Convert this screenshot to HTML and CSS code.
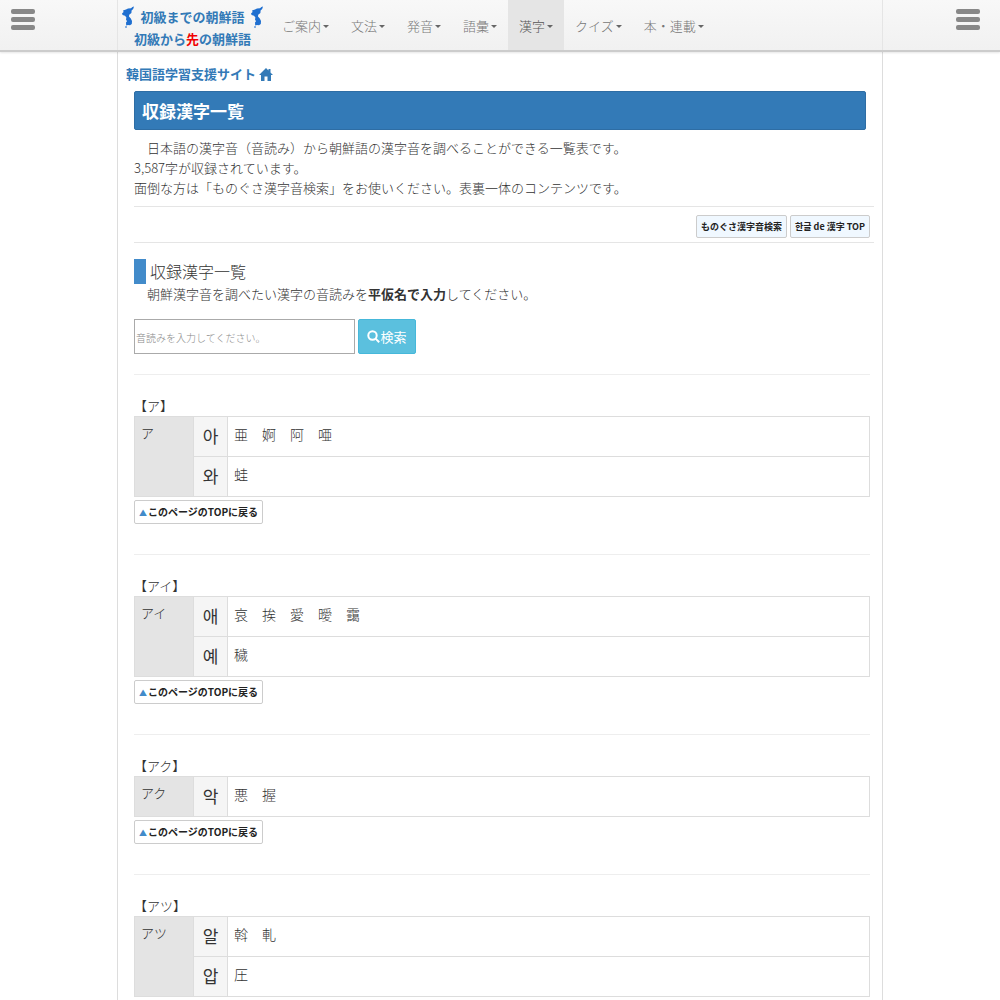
FILE: index.html
```html
<!DOCTYPE html>
<html lang="ja">
<head>
  <meta charset="UTF-8">
  <meta name="viewport" content="width=device-width, initial-scale=1">
  <title>収録漢字一覧</title>
  <link rel="stylesheet" href="styles.css">
</head>
<body id="top">

  <svg class="defs" aria-hidden="true">
    <symbol id="korea" viewBox="0 0 14 22">
      <path d="M13 .4 11.400 1 10 2.200 7 2.400 5 3.600 2 4.400 2.600 6 1 7.400 1.600 9 4 9.800 5.400 11.400 5 13.600 6 15.200 5 16.600 5.200 19.400 7 19 9 19.200 10.800 18 11 15 9.800 12.400 8 10.400 8.200 8.800 10.400 7 10.600 4.600 12.200 3Z"/>
      <path d="M4 20.600h2v1H4z"/>
    </symbol>
  </svg>

  <header class="navbar">
    <button class="menu-btn" aria-label="左メニュー"><span></span><span></span><span></span></button>
    <div class="navbar-inner">
      <a class="brand" href="#top">
        <span class="brand-row">
          <svg class="map"><use href="#korea"/></svg>
          初級までの朝鮮語
          <svg class="map"><use href="#korea"/></svg>
        </span>
        <span>初級から<em>先</em>の朝鮮語</span>
      </a>
      <nav class="nav">
        <a href="#">ご案内</a>
        <a href="#">文法</a>
        <a href="#">発音</a>
        <a href="#">語彙</a>
        <a href="#" class="active">漢字</a>
        <a href="#">クイズ</a>
        <a href="#">本・連載</a>
      </nav>
    </div>
    <button class="menu-btn" aria-label="右メニュー"><span></span><span></span><span></span></button>
  </header>

  <main class="container">
    <a class="site-link" href="#">韓国語学習支援サイト
      <svg class="home" viewBox="0 0 14 13"><path d="M7 0 0 7h2v6h3.500V8.500h3V13H12V7h2l-2.500-2.500V1h-2v1.500Z"/></svg>
    </a>

    <div class="content">
      <h1>収録漢字一覧</h1>
      <p>
        　日本語の漢字音（音読み）から朝鮮語の漢字音を調べることができる一覧表です。<br>
        3,587字が収録されています。<br>
        面倒な方は「ものぐさ漢字音検索」をお使いください。表裏一体のコンテンツです。
      </p>

      <div class="links">
        <a class="btn btn-sub" href="#">ものぐさ漢字音検索</a>
        <a class="btn btn-sub" href="#">한글 de 漢字 TOP</a>
      </div>

      <h2>収録漢字一覧</h2>
      <p>　朝鮮漢字音を調べたい漢字の音読みを<strong>平仮名で入力</strong>してください。</p>

      <form class="search">
        <input type="text" aria-label="音読み" placeholder="音読みを入力してください。">
        <button type="button">
          <svg viewBox="0 0 13 13"><circle cx="5.500" cy="5.500" r="4.200"/><path d="m8.600 8.600 3.600 3.600"/></svg>検索
        </button>
      </form>

      <section>
        <h3>【ア】</h3>
        <table>
          <tr><th class="yomi" rowspan="2">ア</th><th class="hangul">아</th><td>亜　婀　阿　唖</td></tr>
          <tr><th class="hangul">와</th><td>蛙</td></tr>
        </table>
        <a class="btn btn-top" href="#top"><span>▲</span>このページのTOPに戻る</a>
      </section>

      <section>
        <h3>【アイ】</h3>
        <table>
          <tr><th class="yomi" rowspan="2">アイ</th><th class="hangul">애</th><td>哀　挨　愛　曖　靄</td></tr>
          <tr><th class="hangul">예</th><td>穢</td></tr>
        </table>
        <a class="btn btn-top" href="#top"><span>▲</span>このページのTOPに戻る</a>
      </section>

      <section>
        <h3>【アク】</h3>
        <table>
          <tr><th class="yomi">アク</th><th class="hangul">악</th><td>悪　握</td></tr>
        </table>
        <a class="btn btn-top" href="#top"><span>▲</span>このページのTOPに戻る</a>
      </section>

      <section>
        <h3>【アツ】</h3>
        <table>
          <tr><th class="yomi" rowspan="2">アツ</th><th class="hangul">알</th><td>斡　軋</td></tr>
          <tr><th class="hangul">압</th><td>圧</td></tr>
        </table>
      </section>
    </div>
  </main>

</body>
</html>
```
FILE: styles.css
```css
* {
  box-sizing: border-box;
}

body {
  margin: 0;
  min-height: 100vh;
  display: flex;
  flex-direction: column;
  font-family: "Noto Sans CJK JP", "Noto Sans CJK KR", sans-serif;
  font-size: 13px;
  font-weight: 300;
  line-height: 20px;
  color: #333;
  background: #fff;
}

a {
  color: #337ab7;
  text-decoration: none;
}

p {
  margin: 0;
}

strong {
  font-weight: 700;
}

.defs {
  display: none;
}

/* header */
.navbar {
  position: sticky;
  top: 0;
  z-index: 10;
  display: flex;
  justify-content: space-between;
  height: 52px;
  background: linear-gradient(#f8f8f8, #f1f1f1);
  border-bottom: 2px solid #ccc;
  box-shadow: 0 1px 2px rgba(0,0,0,0.1);
}

.menu-btn {
  flex: 1 1 48px;
  display: flex;
  flex-direction: column;
  gap: 3px;
  padding: 9px 11px;
  border: 0;
  background: none;
  cursor: pointer;
}

.menu-btn:last-child {
  align-items: flex-end;
  padding-right: 20px;
}

.menu-btn span {
  width: 24px;
  height: 5px;
  border-radius: 2px;
  background: #888;
}

.navbar-inner {
  flex: 0 1 766px;
  display: flex;
  border-left: 1px solid #e5e5e5;
  border-right: 1px solid #e5e5e5;
}

.brand {
  width: 153px;
  padding: 6px 4px 0 0;
  display: flex;
  flex-direction: column;
  align-items: center;
  line-height: 22px;
  font-weight: 700;
  white-space: nowrap;
}

.brand-row {
  display: flex;
  align-items: center;
  gap: 5px;
}

.brand em {
  font-style: normal;
  color: #f00000;
}

.map {
  width: 14px;
  height: 22px;
  fill: #1f6fd0;
}

.nav {
  display: flex;
  height: 50px;
}

.nav a {
  display: flex;
  align-items: center;
  gap: 2px;
  padding: 2px 11px 0;
  color: #777;
  white-space: nowrap;
}

.nav a::after {
  content: "";
  border: 3px solid transparent;
  border-top-color: #666;
  border-bottom: 0;
}

.nav a.active {
  background: #e5e5e5;
  color: #555;
}

/* page */
.container {
  flex: 1;
  width: 100%;
  max-width: 766px;
  margin: 0 auto;
  padding: 12px 8px 0;
  border-left: 1px solid #ddd;
  border-right: 1px solid #ddd;
}

.site-link {
  display: flex;
  align-items: center;
  gap: 3px;
  font-weight: 700;
}

.home {
  width: 14px;
  height: 13px;
  fill: #337ab7;
}

.content {
  padding: 7px 4px 0 8px;
}

h1 {
  margin: 0 4px 8px 0;
  padding: 0 7px;
  border: 1px solid #2e6da4;
  border-radius: 2px;
  background: #337ab7;
  color: #fff;
  font-size: 17px;
  font-weight: 700;
  line-height: 37px;
}

h2 {
  margin: 16px 0 0;
  padding-left: 4px;
  border-left: 12px solid #428bca;
  font-size: 16px;
  font-weight: 300;
  line-height: 25px;
}

h3 {
  margin: 0;
  font-size: 13px;
  font-weight: 300;
}

.links {
  display: flex;
  justify-content: flex-end;
  gap: 3px;
  margin-top: 8px;
  margin-right: -4px;
  padding: 8px 4px 4px 0;
  border-top: 1px solid #e5e5e5;
  border-bottom: 1px solid #e5e5e5;
}

.btn {
  border: 1px solid #ccc;
  border-radius: 2px;
  color: #222;
  font-weight: 700;
}

.btn-sub {
  padding: 0 4px;
  font-size: 9px;
  line-height: 21px;
  background: #f0f8ff;
}

.btn-top {
  display: table;
  margin-top: 3px;
  padding: 0 4px;
  font-size: 10px;
  line-height: 22px;
}

.btn-top span {
  margin-right: 1px;
  color: #428bca;
  font-size: 8px;
  line-height: 1;
}

.search {
  display: flex;
  gap: 3px;
  margin: 15px 0 20px;
}

.search input {
  width: 221px;
  height: 35px;
  padding: 2px 1px 0;
  border: 1px solid #aaa;
  font: inherit;
  font-size: 10px;
}

.search input::placeholder {
  color: #888;
}

.search button {
  display: flex;
  align-items: center;
  justify-content: center;
  width: 58px;
  height: 35px;
  padding: 0;
  border: 1px solid #46b8da;
  border-radius: 2px;
  background: #5bc0de;
  color: #fff;
  font: inherit;
  font-weight: 400;
}

.search svg {
  width: 13px;
  height: 13px;
  fill: none;
  stroke: #fff;
  stroke-width: 2;
}

section {
  padding-top: 21px;
  border-top: 1px solid #eee;
}

section + section {
  margin-top: 30px;
}

table {
  width: 100%;
  border-collapse: collapse;
}

tr {
  height: 40px;
}

th, td {
  padding: 6px;
  border: 1px solid #ddd;
  text-align: left;
  vertical-align: top;
  font-weight: 300;
}

td {
  padding-top: 5px;
  font-size: 14px;
  line-height: 24px;
}

.yomi {
  width: 59px;
  background: #e4e4e4;
}

.hangul {
  width: 34px;
  padding: 5px 0;
  background: #f5f5f5;
  text-align: center;
  font-size: 17px;
  font-weight: 400;
  line-height: 27px;
}
```
